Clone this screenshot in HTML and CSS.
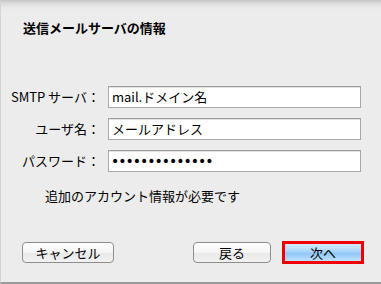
FILE: index.html
```html
<!DOCTYPE html>
<html lang="ja">
<head>
<meta charset="utf-8">
<link rel="stylesheet" href="styles.css">
</head>
<body>
<div class="dialog">
  <h1 class="title">送信メールサーバの情報</h1>
  <div class="form">
    <div class="label">SMTP サーバ：</div>
    <div class="field">mail.ドメイン名</div>
    <div class="label">ユーザ名：</div>
    <div class="field">メールアドレス</div>
    <div class="label">パスワード：</div>
    <div class="field dots">••••••••••••••</div>
  </div>
  <p class="note">追加のアカウント情報が必要です</p>
  <div class="buttons">
    <button class="btn cancel">キャンセル</button>
    <div class="right">
      <button class="btn back">戻る</button>
      <div class="highlight"><button class="btn next">次へ</button></div>
    </div>
  </div>
</div>
</body>
</html>
```
FILE: styles.css
```css
html, body {
  margin: 0;
  padding: 0;
}
body {
  width: 381px;
  height: 284px;
  overflow: hidden;
  background: #ececec;
  font-family: "Noto Sans CJK JP", "Noto Sans", sans-serif;
  color: #000;
}
.dialog {
  box-sizing: border-box;
  width: 381px;
  height: 284px;
  background: linear-gradient(#c4c4c4 0, #dadada 3px, #e8e8e8 7px, #ececec 10px);
  border-bottom: 2px solid #9a9a9a;
  border-left: 1px solid #d4d4d4;
  display: flex;
  flex-direction: column;
}
.title {
  margin: 20px 0 0 22px;
  font-size: 13px;
  line-height: 16px;
  font-weight: bold;
  height: 16px;
}
.form {
  margin-top: 50px;
  display: grid;
  grid-template-columns: 99px 253px;
  column-gap: 8px;
  row-gap: 10px;
  align-items: center;
}
.label {
  font-size: 13px;
  line-height: 16px;
  text-align: right;
  white-space: nowrap;
}
.field {
  box-sizing: border-box;
  height: 22px;
  background: #fff;
  border: 1px solid #a9a9a9;
  border-top-color: #9c9c9c;
  box-shadow: inset 0 1px 0 #e2e2e2;
  font-size: 13px;
  line-height: 20px;
  padding-left: 3px;
  white-space: nowrap;
}
.dots {
  font-family: "DejaVu Sans", sans-serif;
  font-size: 14px;
  letter-spacing: -1px;
  line-height: 20px;
  padding-left: 2px;
}
.note {
  margin: 16px 0 0 44px;
  font-size: 13px;
  line-height: 16px;
}
.buttons {
  margin-top: 37px;
  display: flex;
  align-items: center;
  justify-content: space-between;
  padding: 0 17px 0 21px;
}
.right {
  display: flex;
  align-items: center;
  gap: 11px;
}
.btn {
  box-sizing: border-box;
  font-family: "Noto Sans CJK JP", sans-serif;
  font-size: 13px;
  line-height: 16px;
  color: #000;
  border: 1px solid #8e8e8e;
  border-radius: 4px;
  background: linear-gradient(#ffffff, #f4f4f4 50%, #e8e8e8 51%, #f2f2f2);
  padding: 0;
  height: 21px;
}
.cancel {
  width: 92px;
}
.back {
  width: 78px;
}
.highlight {
  border: 3px solid #ee0000;
  padding: 0;
  display: flex;
}
.next {
  width: 76px;
  height: 17px;
  border: none;
  border-radius: 0;
  line-height: 15px;
  background: linear-gradient(#d8ecfd, #a9d4fa 45%, #8fc6f7 55%, #bfe2fe);
}
```
